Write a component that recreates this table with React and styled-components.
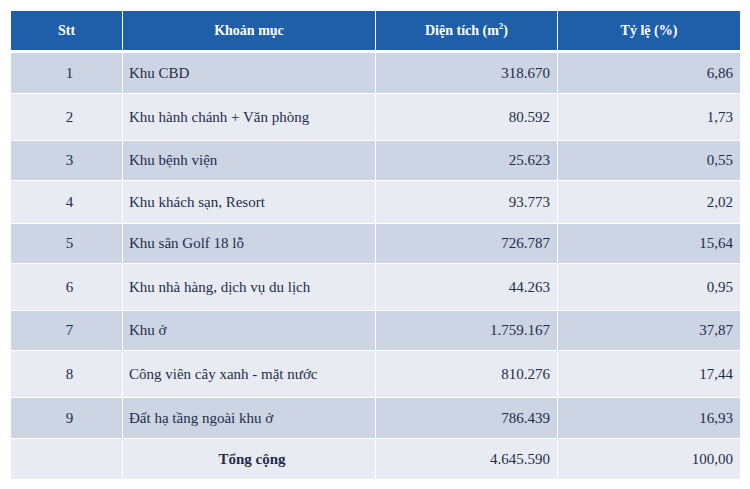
import styled, { createGlobalStyle } from "styled-components";

const serif = `"Liberation Serif", "Times New Roman", Tinos, "DejaVu Serif", serif`;

const GlobalStyle = createGlobalStyle`
  html, body {
    margin: 0;
    padding: 0;
    background: #ffffff;
  }
`;

const Page = styled.div`
  padding: 11px 0 0 11px;
  width: 750px;
  height: 489px;
  box-sizing: border-box;
  font-family: ${serif};
`;

const Table = styled.div`
  display: flex;
  flex-direction: column;
  gap: 1px;
  width: 729px;
`;

const Row = styled.div`
  display: grid;
  grid-template-columns: 111px 252px 181px 182px;
  column-gap: 1px;
  height: ${(props) => props.h}px;
  margin-bottom: ${(props) => (props.head ? "2px" : "0")};
`;

const HeadCell = styled.div`
  background: #1f5faa;
  color: #ffffff;
  font-family: ${serif};
  font-weight: bold;
  font-size: 14px;
  display: flex;
  align-items: center;
  justify-content: center;
`;

const Sup = styled.span`
  font-size: 9px;
  position: relative;
  top: -5px;
`;

const Cell = styled.div`
  background: ${(props) => (props.dark ? "#cdd4e3" : "#e8ebf2")};
  color: #1e2d4c;
  font-family: ${serif};
  font-size: 15px;
  display: flex;
  align-items: center;
  justify-content: ${(props) =>
    props.align === "right"
      ? "flex-end"
      : props.align === "center"
      ? "center"
      : "flex-start"};
  padding: ${(props) => (props.align === "right" ? "0 7px 0 0" : "0 0 0 6px")};
  font-weight: ${(props) => (props.bold ? "bold" : "normal")};
`;

const rows = [
  ["1", "Khu CBD", "318.670", "6,86", 40],
  ["2", "Khu hành chánh + Văn phòng", "80.592", "1,73", 46],
  ["3", "Khu bệnh viện", "25.623", "0,55", 39],
  ["4", "Khu khách sạn, Resort", "93.773", "2,02", 42],
  ["5", "Khu sân Golf 18 lỗ", "726.787", "15,64", 39],
  ["6", "Khu nhà hàng, dịch vụ du lịch", "44.263", "0,95", 46],
  ["7", "Khu ở", "1.759.167", "37,87", 39],
  ["8", "Công viên cây xanh - mặt nước", "810.276", "17,44", 46],
  ["9", "Đất hạ tầng ngoài khu ở", "786.439", "16,93", 40],
];

export default function App() {
  return (
    <>
      <GlobalStyle />
      <Page>
        <Table>
          <Row h={39} head>
            <HeadCell>Stt</HeadCell>
            <HeadCell>Khoản mục</HeadCell>
            <HeadCell>
              Diện tích (m<Sup>2</Sup>)
            </HeadCell>
            <HeadCell>Tỷ lệ (%)</HeadCell>
          </Row>
          {rows.map(([stt, name, area, pct, h], i) => (
            <Row key={stt} h={h}>
              <Cell dark={i % 2 === 0} align="center">
                {stt}
              </Cell>
              <Cell dark={i % 2 === 0}>{name}</Cell>
              <Cell dark={i % 2 === 0} align="right">
                {area}
              </Cell>
              <Cell dark={i % 2 === 0} align="right">
                {pct}
              </Cell>
            </Row>
          ))}
          <Row h={40}>
            <Cell />
            <Cell align="center" bold>
              Tổng cộng
            </Cell>
            <Cell align="right">4.645.590</Cell>
            <Cell align="right">100,00</Cell>
          </Row>
        </Table>
      </Page>
    </>
  );
}
